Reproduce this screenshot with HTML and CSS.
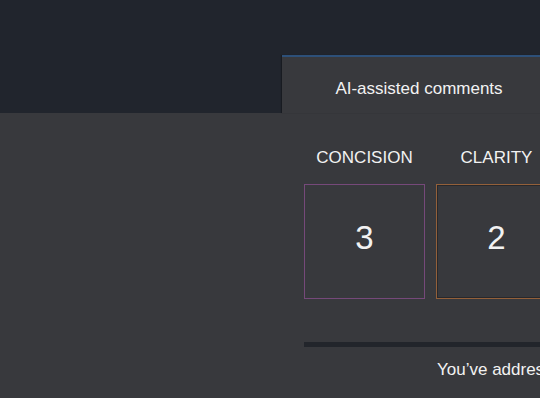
FILE: index.html
```html
<!DOCTYPE html>
<html lang="en">
<head>
    <meta charset="UTF-8">
    <meta name="viewport" content="width=device-width, initial-scale=1.0">
    <title>AI-assisted comments</title>
    <link rel="stylesheet" href="styles.css">
</head>
<body>
    <div class="tab-bar">
        <div class="tab active">AI-assisted comments</div>
    </div>

    <div class="content">
        <div class="scores">
            <div class="score">
                <div class="score-label">CONCISION</div>
                <div class="score-box concision">3</div>
            </div>
            <div class="score">
                <div class="score-label">CLARITY</div>
                <div class="score-box clarity">2</div>
            </div>
        </div>

        <div class="progress"></div>
        <p class="status">You’ve addressed 0 of 5 comments</p>
    </div>
</body>
</html>
```

FILE: styles.css
```css
html, body {
    overflow: hidden;
}
body {
    margin: 0;
    height: 398px;
    background-color: #38393d;
    color: #f2f2f2;
    font-family: "Liberation Sans", Arial, sans-serif;
    font-size: 17px;
    line-height: 20px;
}
.tab-bar {
    display: flex;
    align-items: flex-end;
    height: 113px;
    padding-left: 282px;
    background-color: #21252d;
}
.tab {
    flex: 0 0 274px;
    height: 58px;
    box-sizing: border-box;
    padding-top: 22px;
    border-top: 2px solid #2d5079;
    background-color: #38393d;
    box-shadow: -1px 0 1px rgba(0, 0, 0, 0.25);
    text-align: center;
    white-space: nowrap;
}
.content {
    padding: 35px 0 0 304px;
}
.scores {
    display: flex;
    gap: 11px;
}
.score {
    flex: 0 0 121px;
}
.score-label {
    text-align: center;
    white-space: nowrap;
    margin-bottom: 16px;
}
.score-box {
    display: flex;
    align-items: center;
    justify-content: center;
    height: 115px;
    box-sizing: border-box;
    font-size: 33px;
    line-height: 33px;
    padding-bottom: 8px;
}
.score-box.concision {
    border: 1px solid #76497a;
}
.score-box.clarity {
    border: 1px solid #93603a;
    box-shadow: inset 0 0 0 1px #27282c;
}
.progress {
    height: 5px;
    margin-top: 43px;
    width: 600px;
    background-color: #22252b;
}
.status {
    margin: 13px 0 0 133px;
    white-space: nowrap;
}
```
